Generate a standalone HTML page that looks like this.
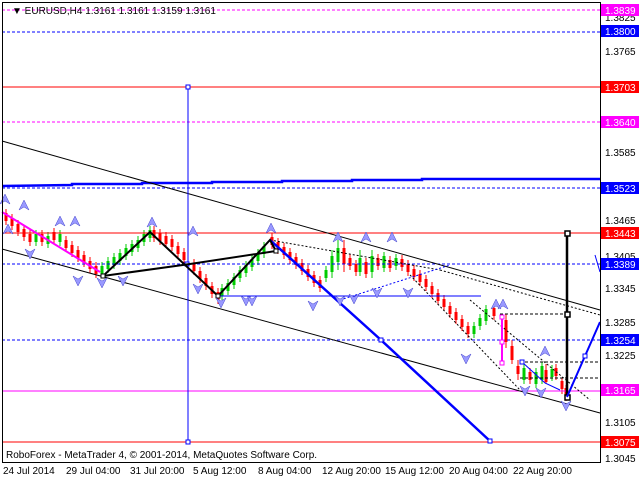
<!DOCTYPE html>
<html><head><meta charset="utf-8"><style>
html,body{margin:0;padding:0;background:#fff;width:640px;height:480px;overflow:hidden}
svg{display:block;font-family:"Liberation Sans",sans-serif;font-size:10px}
</style></head><body>
<svg width="640" height="480" viewBox="0 0 640 480" xmlns="http://www.w3.org/2000/svg">
<rect x="0" y="0" width="640" height="480" fill="#fff"/>
<!-- candles -->
<path stroke="#f00" stroke-width="1" fill="none" d="M6,209V225M12,214V230M18,220V236M24,225V241M30,230V246M42,230V246M54,228V244M66,236V252M72,241V257M78,246V262M84,251V267M90,257V273M96,262V278M154,226V242M160,229V245M166,232V248M172,235V251M178,242V258M184,248V264M194,259V275M200,267V283M206,274V290M212,282V298M218,288V304M272,233V249M278,238V254M284,243V259M290,248V264M296,253V269M302,259V275M308,265V281M314,271V287M320,276V292M344,240V272M350,254V270M356,260V276M366,258V278M378,254V270M390,256V272M402,255V271M408,260V276M414,265V281M420,270V286M426,275V291M432,282V298M438,289V305M444,295V311M450,302V318M456,308V324M462,315V331M468,322V338M494,304V320M506,314V348M512,340V364M518,360V380M530,368V384M546,364V384M556,364V380M562,378V394M566,385V401"/>
<path stroke="#f00" stroke-width="3" fill="none" d="M6,213V221M12,218V226M18,224V232M24,229V237M30,234V242M42,234V242M54,232V240M66,240V248M72,245V253M78,250V258M84,255V263M90,261V269M96,266V274M154,230V238M160,233V241M166,236V244M172,239V247M178,246V254M184,252V260M194,263V271M200,271V279M206,278V286M212,286V294M218,292V300M272,237V245M278,242V250M284,247V255M290,252V260M296,257V265M302,263V271M308,269V277M314,275V283M320,280V288M344,248V264M350,258V266M356,264V272M366,262V274M378,258V266M390,260V268M402,259V267M408,264V272M414,269V277M420,274V282M426,279V287M432,286V294M438,293V301M444,299V307M450,306V314M456,312V320M462,319V327M468,326V334M494,308V316M506,320V342M512,346V360M518,366V374M530,372V380M546,370V382M556,368V376M562,381V389M566,388V398"/>
<path stroke="#0c0" stroke-width="1" fill="none" d="M36,230V246M48,232V248M60,230V246M102,262V278M108,257V273M114,253V269M120,249V265M126,244V260M132,240V256M138,236V252M144,230V246M150,226V242M222,284V300M228,279V295M234,273V289M240,266V282M246,261V277M252,255V271M258,249V265M264,242V258M326,266V282M332,250V278M338,240V270M360,250V276M372,250V278M384,252V272M396,254V270M474,322V338M480,314V330M486,305V325M524,364V384M536,368V388M542,362V384M552,365V381"/>
<path stroke="#0c0" stroke-width="3" fill="none" d="M36,234V242M48,236V244M60,234V242M102,266V274M108,261V269M114,257V265M120,253V261M126,248V256M132,244V252M138,240V248M144,234V242M150,230V238M222,288V296M228,283V291M234,277V285M240,270V278M246,265V273M252,259V267M258,253V261M264,246V254M326,270V278M332,256V272M338,248V262M360,258V272M372,256V272M384,256V268M396,258V266M474,326V334M480,318V326M486,309V321M524,368V380M536,372V384M542,366V380M552,369V377"/>
<!-- horizontal levels -->
<line x1="2" y1="10" x2="600" y2="10" stroke="#f0f" stroke-dasharray="3,2"/>
<line x1="2" y1="32" x2="600" y2="32" stroke="#00f" stroke-dasharray="3,2"/>
<line x1="2" y1="87" x2="600" y2="87" stroke="#f00"/>
<line x1="2" y1="122" x2="600" y2="122" stroke="#f0f" stroke-dasharray="3,2"/>
<polyline points="2,186 72,185 72,184 142,184 142,183 212,183 212,182 282,182 282,181 352,181 352,180 422,180 422,179 600,179" fill="none" stroke="#00f" stroke-width="2.5"/>
<line x1="2" y1="188" x2="600" y2="188" stroke="#00f" stroke-dasharray="3,2"/>
<line x1="2" y1="233" x2="600" y2="233" stroke="#f00"/>
<line x1="2" y1="264" x2="600" y2="264" stroke="#00f" stroke-dasharray="3,2"/>
<line x1="2" y1="340" x2="600" y2="340" stroke="#00f" stroke-dasharray="3,2"/>
<line x1="2" y1="391" x2="600" y2="391" stroke="#f0f"/>
<line x1="2" y1="442" x2="600" y2="442" stroke="#f00"/>
<!-- channels -->
<line x1="2" y1="141" x2="600" y2="310" stroke="#000"/>
<line x1="2" y1="249" x2="600" y2="413" stroke="#000"/>
<line x1="270" y1="240" x2="440" y2="270" stroke="#000" stroke-dasharray="2,2"/>
<line x1="440" y1="270" x2="600" y2="315" stroke="#000" stroke-dasharray="2,2"/>
<line x1="410" y1="275" x2="520" y2="390" stroke="#000" stroke-dasharray="2,2"/>
<line x1="470" y1="300" x2="590" y2="400" stroke="#000" stroke-dasharray="2,2"/>
<line x1="500" y1="314" x2="567" y2="314" stroke="#000" stroke-dasharray="3,2"/>
<line x1="520" y1="362" x2="600" y2="362" stroke="#000" stroke-dasharray="3,2"/>
<line x1="520" y1="378" x2="600" y2="378" stroke="#000" stroke-dasharray="3,2"/>
<line x1="340" y1="300" x2="450" y2="265" stroke="#00f" stroke-dasharray="2,2"/>
<line x1="188" y1="87" x2="188" y2="442" stroke="#00f"/>
<rect x="186" y="85" width="4" height="4" fill="#fff" stroke="#00f"/>
<rect x="186" y="440" width="4" height="4" fill="#fff" stroke="#00f"/>
<line x1="218" y1="296" x2="481" y2="296" stroke="#00f"/>
<line x1="2" y1="212" x2="100" y2="272" stroke="#f0f" stroke-width="2"/>
<polyline points="270,240 381,340 490,441" fill="none" stroke="#00f" stroke-width="2.5"/>
<rect x="379" y="338" width="4" height="4" fill="#fff" stroke="#00f"/>
<rect x="488" y="439" width="4" height="4" fill="#fff" stroke="#00f"/>
<rect x="185" y="262" width="4" height="4" fill="#fff" stroke="#00f"/>
<polyline points="103,276 150,232 218,296 270,240 276,251 190,264 103,276" fill="none" stroke="#000" stroke-width="2"/>
<rect x="101" y="274" width="4" height="4" fill="#fff" stroke="#000"/>
<rect x="216" y="294" width="4" height="4" fill="#fff" stroke="#000"/>
<rect x="274" y="249" width="4" height="4" fill="#fff" stroke="#000"/>
<line x1="567" y1="233" x2="567" y2="398" stroke="#000" stroke-width="2.5"/>
<rect x="565" y="231" width="5" height="5" fill="#fff" stroke="#000" stroke-width="1.5"/>
<rect x="565" y="312" width="5" height="5" fill="#fff" stroke="#000" stroke-width="1.5"/>
<rect x="565" y="395" width="5" height="5" fill="#fff" stroke="#000" stroke-width="1.5"/>
<polyline points="567,397 585,356 600,322" fill="none" stroke="#00f" stroke-width="2"/>
<rect x="583" y="354" width="4" height="4" fill="#fff" stroke="#00f"/>
<polyline points="522,362 533,372 545,383 560,390" fill="none" stroke="#00f"/>
<rect x="520" y="360" width="4" height="4" fill="#fff" stroke="#00f"/>
<line x1="502" y1="317" x2="502" y2="363" stroke="#f0f" stroke-width="2"/>
<rect x="500" y="315" width="4" height="4" fill="#fff" stroke="#f0f"/>
<rect x="500" y="340" width="4" height="4" fill="#fff" stroke="#f0f"/>
<rect x="500" y="361" width="4" height="4" fill="#fff" stroke="#f0f"/>
<line x1="595" y1="255" x2="600" y2="272" stroke="#00f"/>
<!-- arrows -->
<g fill="#99f" stroke="#44c" stroke-width="0.5">
<path d="M5,194l5,10l-5,-3l-5,3z"/><path d="M24,200l5,10l-5,-3l-5,3z"/><path d="M60,216l5,10l-5,-3l-5,3z"/><path d="M75,216l5,10l-5,-3l-5,3z"/><path d="M152,217l5,10l-5,-3l-5,3z"/><path d="M193,226l5,10l-5,-3l-5,3z"/><path d="M271,223l5,10l-5,-3l-5,3z"/><path d="M338,232l5,10l-5,-3l-5,3z"/><path d="M366,232l5,10l-5,-3l-5,3z"/><path d="M392,232l5,10l-5,-3l-5,3z"/><path d="M496,299l5,10l-5,-3l-5,3z"/><path d="M503,299l5,10l-5,-3l-5,3z"/><path d="M545,346l5,10l-5,-3l-5,3z"/><path d="M8,224l5,10l-5,-3l-5,3z"/>
<path d="M30,259l5,-10l-5,3l-5,-3z"/><path d="M78,286l5,-10l-5,3l-5,-3z"/><path d="M102,288l5,-10l-5,3l-5,-3z"/><path d="M123,286l5,-10l-5,3l-5,-3z"/><path d="M198,294l5,-10l-5,3l-5,-3z"/><path d="M221,308l5,-10l-5,3l-5,-3z"/><path d="M246,306l5,-10l-5,3l-5,-3z"/><path d="M252,306l5,-10l-5,3l-5,-3z"/><path d="M313,311l5,-10l-5,3l-5,-3z"/><path d="M340,306l5,-10l-5,3l-5,-3z"/><path d="M354,304l5,-10l-5,3l-5,-3z"/><path d="M377,298l5,-10l-5,3l-5,-3z"/><path d="M408,298l5,-10l-5,3l-5,-3z"/><path d="M466,364l5,-10l-5,3l-5,-3z"/><path d="M525,396l5,-10l-5,3l-5,-3z"/><path d="M541,398l5,-10l-5,3l-5,-3z"/><path d="M566,411l5,-10l-5,3l-5,-3z"/>
</g>
<rect x="2.5" y="2.5" width="598" height="460" fill="none" stroke="#000"/>
<g fill="#000">
<text x="12" y="14">▼ EURUSD,H4  1.3161 1.3161 1.3159 1.3161</text>
<text x="6" y="458">RoboForex - MetaTrader 4, © 2001-2014, MetaQuotes Software Corp.</text>
</g>
<g fill="#000">
<text x="605" y="21">1.3825</text><text x="605" y="55">1.3765</text>
<text x="605" y="156">1.3585</text><text x="605" y="224">1.3465</text>
<text x="605" y="260">1.3405</text><text x="605" y="292">1.3345</text>
<text x="605" y="326">1.3285</text><text x="605" y="359">1.3225</text>
<text x="605" y="426">1.3105</text><text x="605" y="462">1.3045</text>
</g>
<g fill="#fff">
<rect x="601" y="4" width="38" height="12" fill="#f0f"/><text x="605" y="14">1.3839</text>
<rect x="601" y="25" width="38" height="12" fill="#00f"/><text x="605" y="35">1.3800</text>
<rect x="601" y="81" width="38" height="12" fill="#f00"/><text x="605" y="91">1.3703</text>
<rect x="601" y="116" width="38" height="12" fill="#f0f"/><text x="605" y="126">1.3640</text>
<rect x="601" y="182" width="38" height="12" fill="#00f"/><text x="605" y="192">1.3523</text>
<rect x="601" y="227" width="38" height="12" fill="#f00"/><text x="605" y="237">1.3443</text>
<rect x="601" y="258" width="38" height="12" fill="#00f"/><text x="605" y="268">1.3389</text>
<rect x="601" y="334" width="38" height="12" fill="#00f"/><text x="605" y="344">1.3254</text>
<rect x="601" y="384" width="38" height="12" fill="#f0f"/><text x="605" y="394">1.3165</text>
<rect x="601" y="436" width="38" height="12" fill="#f00"/><text x="605" y="446">1.3075</text>
</g>
<g fill="#000">
<text x="3" y="474">24 Jul 2014</text><text x="66" y="474">29 Jul 04:00</text>
<text x="130" y="474">31 Jul 20:00</text><text x="193" y="474">5 Aug 12:00</text>
<text x="258" y="474">8 Aug 04:00</text><text x="322" y="474">12 Aug 20:00</text>
<text x="385" y="474">15 Aug 12:00</text><text x="449" y="474">20 Aug 04:00</text>
<text x="513" y="474">22 Aug 20:00</text>
</g>
</svg>
</body></html>
